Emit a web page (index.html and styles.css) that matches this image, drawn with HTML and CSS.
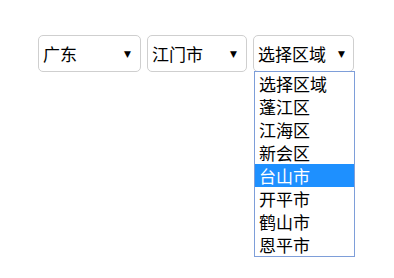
FILE: index.html
```html
<!DOCTYPE html>
<html>
<head>
<meta charset="utf-8">
<link rel="stylesheet" href="styles.css">
</head>
<body>
<div class="row">
  <div class="select s1"><span class="val">广东</span><span class="arrow">▼</span></div>
  <div class="select s2"><span class="val">江门市</span><span class="arrow">▼</span></div>
  <div class="col">
    <div class="select s3"><span class="val">选择区域</span><span class="arrow">▼</span></div>
    <div class="list">
      <div class="opt">选择区域</div>
      <div class="opt">蓬江区</div>
      <div class="opt">江海区</div>
      <div class="opt">新会区</div>
      <div class="opt sel">台山市</div>
      <div class="opt">开平市</div>
      <div class="opt">鹤山市</div>
      <div class="opt">恩平市</div>
    </div>
  </div>
</div>
</body>
</html>
```
FILE: styles.css
```css
html, body {
  margin: 0;
  padding: 0;
  background: #fff;
}
body {
  font-family: "Noto Sans CJK SC", "Noto Sans", sans-serif;
  font-size: 17px;
  color: #000;
}
.row {
  display: flex;
  align-items: flex-start;
  gap: 6px;
  padding: 35px 0 0 38px;
}
.col {
  display: flex;
  flex-direction: column;
}
.select {
  box-sizing: border-box;
  width: 103px;
  height: 37px;
  border: 1px solid #cfcfcf;
  border-radius: 5px;
  display: flex;
  align-items: center;
  justify-content: space-between;
  padding: 0 9px 0 4px;
}
.s2 { width: 100px; }
.s3 { width: 101px; padding-right: 8px; }
.val {
  line-height: 20px;
}
.arrow {
  font-size: 9px;
  line-height: 10px;
  font-family: "DejaVu Sans", sans-serif;
}
.list {
  box-sizing: border-box;
  width: 101px;
  margin-top: -1px;
  margin-left: 1px;
  border: 1px solid #7e9ed9;
  background: #fff;
}
.opt {
  height: 23px;
  line-height: 23px;
  padding-left: 4px;
  white-space: nowrap;
}
.opt.sel {
  background: #1e90ff;
  color: #fff;
}
```
